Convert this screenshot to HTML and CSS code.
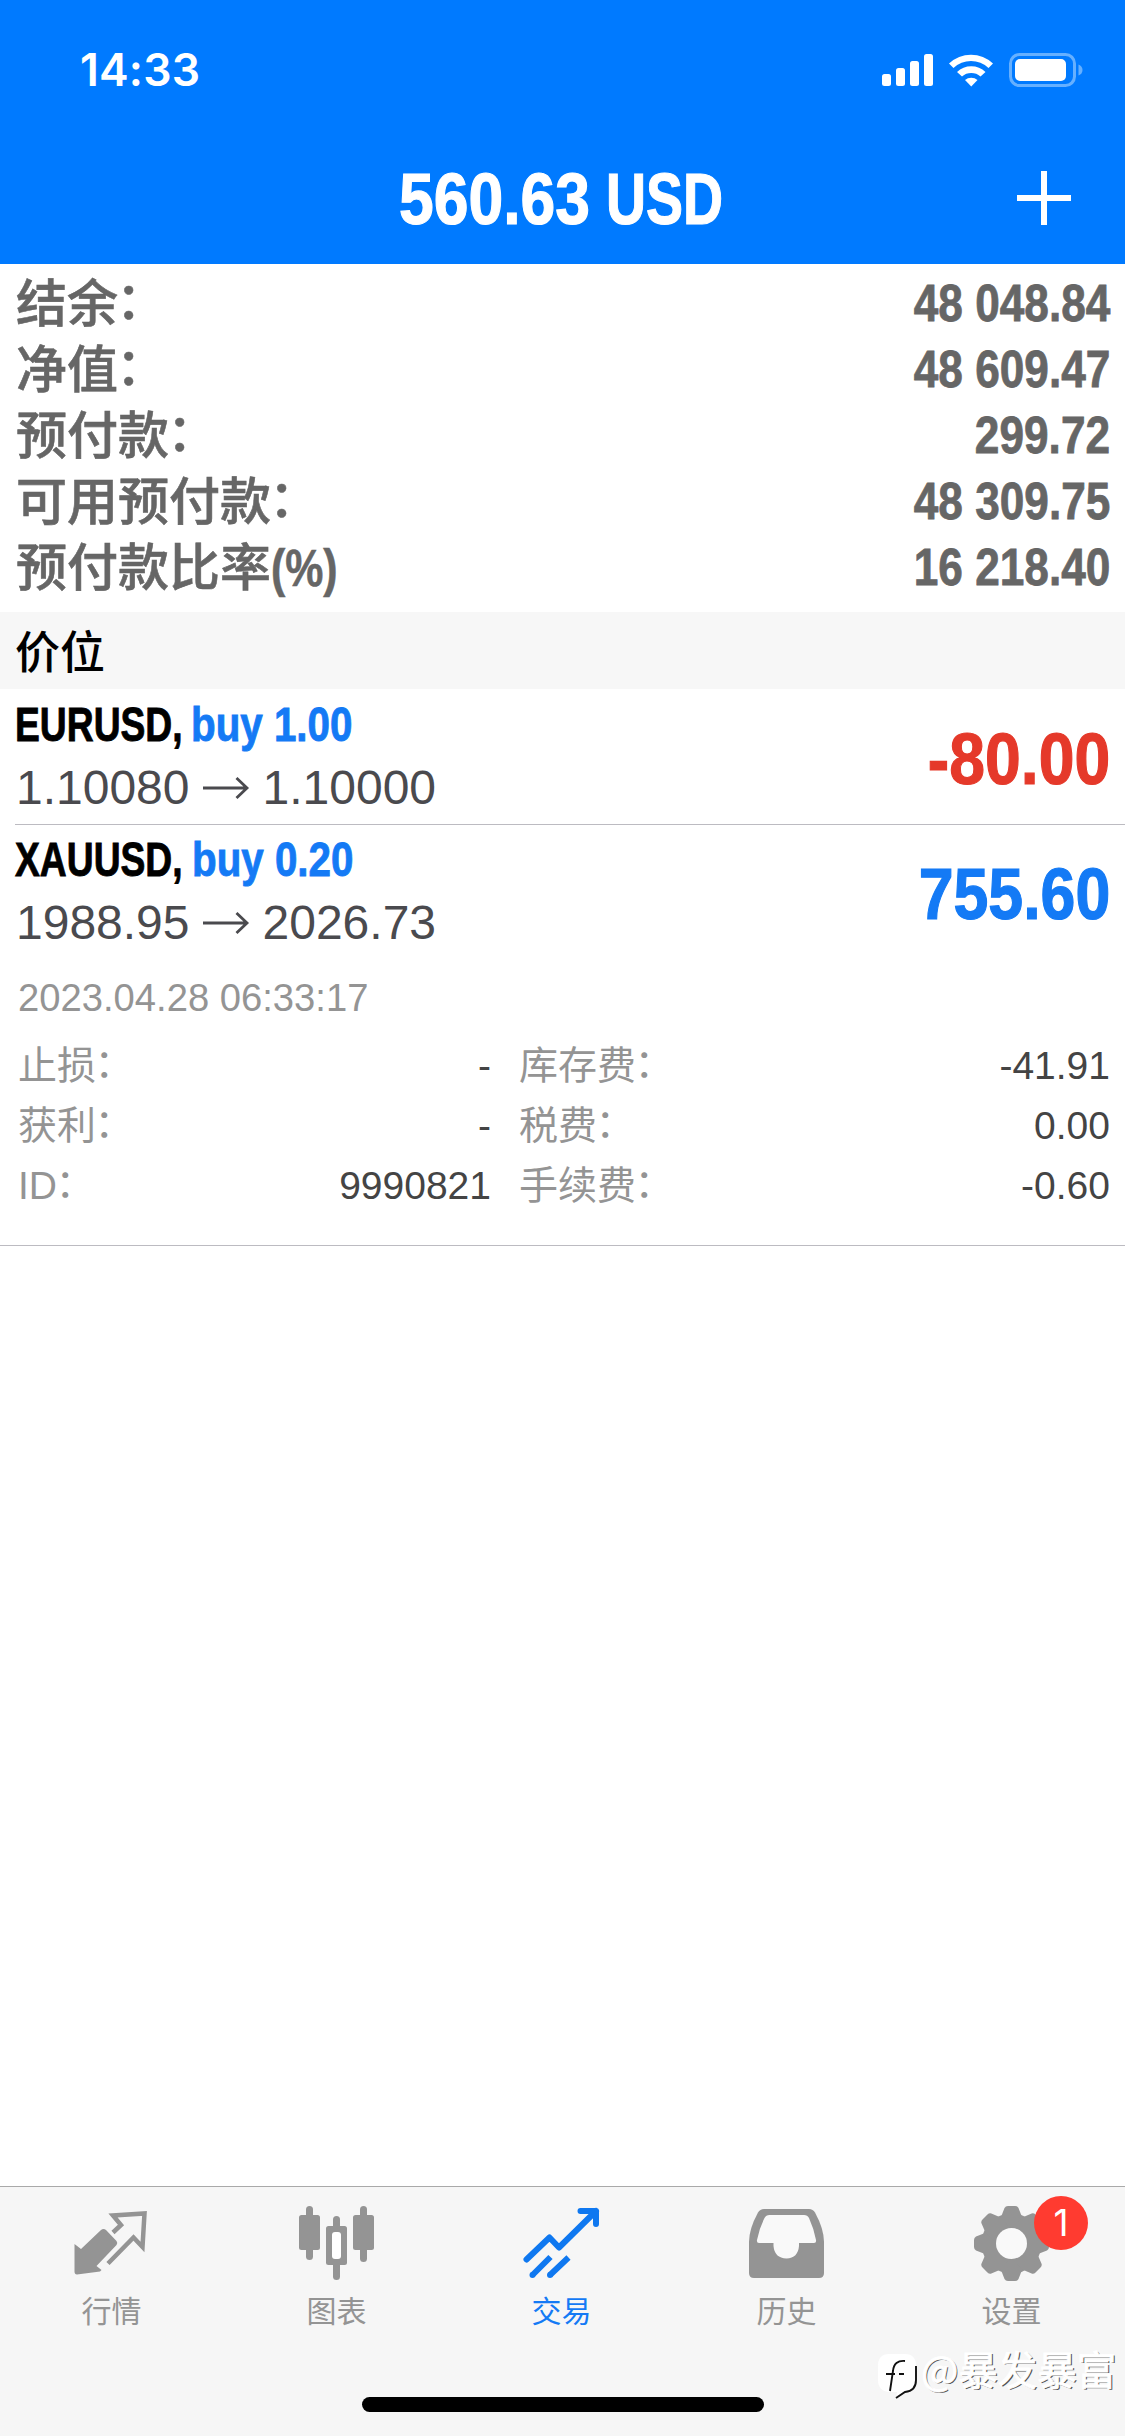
FILE: index.html
```html
<!DOCTYPE html>
<html lang="zh-CN">
<head>
<meta charset="utf-8">
<title>交易</title>
<link rel="stylesheet" href="styles.css">
</head>
<body>
<div class="app">
  <header class="header">
    <div class="status">
      <span class="clock">14:33</span>
      <svg class="status-icons" width="202" height="36" viewBox="0 0 202 36">
        <g fill="#fff">
          <rect x="0" y="22" width="9" height="12" rx="2.5"/>
          <rect x="14" y="16" width="9" height="18" rx="2.5"/>
          <rect x="28" y="9" width="9" height="25" rx="2.5"/>
          <rect x="42" y="2" width="9" height="32" rx="2.5"/>
          <path d="M67 11.500A32 32 0 0 1 111 11.500L106.500 16A25.500 25.500 0 0 0 71.500 16Z"/>
          <path d="M75 20A20.500 20.500 0 0 1 103.500 20L98.500 24.500A14 14 0 0 0 80 24.500Z"/>
          <path d="M83 28A9.500 9.500 0 0 1 95.500 28L89.250 34.500Z"/>
          <rect x="133" y="7" width="51" height="22" rx="5"/>
        </g>
        <rect x="128.500" y="2.500" width="64" height="31" rx="9" fill="none" stroke="#66b0ff" stroke-width="3"/>
        <path d="M196.500 12.500Q200.500 14 200.500 18T196.500 23.500Z" fill="#66b0ff"/>
      </svg>
    </div>
    <div class="titlebar">
      <h1 class="title"><span class="amount">560.63</span><span class="currency">USD</span></h1>
      <svg class="add" width="56" height="56" viewBox="0 0 56 56"><path d="M28 1V55M1 28H55" stroke="#fff" stroke-width="6"/></svg>
    </div>
  </header>

  <main class="content">
    <dl class="summary">
      <div class="sum-row"><dt>结余<span class="colon">：</span></dt><dd>48 048.84</dd></div>
      <div class="sum-row"><dt>净值<span class="colon">：</span></dt><dd>48 609.47</dd></div>
      <div class="sum-row"><dt>预付款<span class="colon">：</span></dt><dd>299.72</dd></div>
      <div class="sum-row"><dt>可用预付款<span class="colon">：</span></dt><dd>48 309.75</dd></div>
      <div class="sum-row"><dt>预付款比率<span class="pct">(%)</span></dt><dd>16 218.40</dd></div>
    </dl>
    <h2 class="section">价位</h2>

    <section class="position">
      <div class="pos-main">
        <div class="pos-name"><span class="symbol eur">EURUSD,</span><span class="order">buy 1.00</span></div>
        <div class="pos-price">1.10080<svg class="arrow" width="48" height="22" viewBox="0 0 48 22"><path d="M1 11H45M34.500 1L45 11L34.500 21" fill="none" stroke="#4a4a4e" stroke-width="2.800"/></svg>1.10000</div>
      </div>
      <div class="profit loss">-80.00</div>
    </section>

    <section class="position second">
      <div class="pos-main">
        <div class="pos-name"><span class="symbol xau">XAUUSD,</span><span class="order">buy 0.20</span></div>
        <div class="pos-price">1988.95<svg class="arrow" width="48" height="22" viewBox="0 0 48 22"><path d="M1 11H45M34.500 1L45 11L34.500 21" fill="none" stroke="#4a4a4e" stroke-width="2.800"/></svg>2026.73</div>
      </div>
      <div class="profit gain">755.60</div>
    </section>

    <section class="details">
      <div class="time">2023.04.28 06:33:17</div>
      <div class="grid">
        <span class="k">止损<span class="colon">：</span></span><span class="v">-</span><span class="k">库存费<span class="colon">：</span></span><span class="v">-41.91</span>
        <span class="k">获利<span class="colon">：</span></span><span class="v">-</span><span class="k">税费<span class="colon">：</span></span><span class="v">0.00</span>
        <span class="k">ID<span class="colon">：</span></span><span class="v">9990821</span><span class="k">手续费<span class="colon">：</span></span><span class="v">-0.60</span>
      </div>
    </section>
  </main>

  <footer class="footer">
    <nav class="tabs">
      <div class="tab">
        <svg width="80" height="80" viewBox="0 0 80 80">
          <path d="M2.500 39L9 44L29 25Q31.500 23 34 25L44.500 36Q46 38 44.500 40L24.500 61L29.500 65L28 66.500L5 69.500Q2.500 69.500 2.500 66.500Z" fill="#949494"/>
          <path d="M41 27.500L49 20L41 10.500L72.500 8.500L70.500 42L61.500 32.500L36 58.500" fill="none" stroke="#949494" stroke-width="4.500"/>
        </svg>
        <span>行情</span>
      </div>
      <div class="tab">
        <svg width="80" height="80" viewBox="0 0 80 80">
          <g fill="#949494">
            <rect x="9" y="1" width="7" height="54" rx="3.500"/><rect x="2" y="10" width="21" height="35" rx="2.500"/>
            <rect x="36" y="11" width="7" height="64" rx="3.500"/><rect x="29" y="21" width="21" height="39" rx="2.500"/>
            <rect x="63" y="1" width="7" height="56" rx="3.500"/><rect x="56" y="10" width="21" height="35" rx="2.500"/>
          </g>
          <rect x="35" y="27" width="9" height="27" rx="3" fill="#fff"/>
        </svg>
        <span>图表</span>
      </div>
      <div class="tab active">
        <svg width="80" height="80" viewBox="0 0 80 80">
          <path d="M4.500 54.500L27.500 32.500L37 42.500L74 6M58.500 6H74V19" fill="none" stroke="#0f78f0" stroke-width="6" stroke-linecap="round" stroke-linejoin="round"/>
          <path d="M10.500 70L28.500 52M28 70L46.500 52.500" fill="none" stroke="#0f78f0" stroke-width="6"/>
          <circle cx="10.500" cy="70" r="3" fill="#0f78f0"/><circle cx="28" cy="70" r="3" fill="#0f78f0"/>
        </svg>
        <span>交易</span>
      </div>
      <div class="tab">
        <svg width="80" height="80" viewBox="0 0 80 80">
          <path d="M17 4H62Q66 4 68 7.500Q77 24 77 37V68Q77 73 72 73H7Q2 73 2 68V37Q2 24 11 7.500Q13 4 17 4Z" fill="#949494"/>
          <path d="M22.500 10H57Q60.500 10 62 13Q67 24 69 35Q69.500 38 67 38H52V41Q51 53 39.500 53.500Q27.500 53 26.500 41V38H12Q9.500 38 10 35Q12 24 17.500 13Q19 10 22.500 10Z" fill="#f9f9f9"/>
        </svg>
        <span>历史</span>
      </div>
      <div class="tab">
        <svg width="80" height="80" viewBox="0 0 80 80">
          <g fill="#949494">
            <circle cx="39.500" cy="38.500" r="30"/>
            <path id="tooth" d="M29 12L32.500 3Q33.500 1 36 1H43Q45.500 1 46.500 3L50 12V65L46.500 74Q45.500 76 43 76H36Q33.500 76 32.500 74L29 65Z"/>
            <use href="#tooth" transform="rotate(45 39.500 38.500)"/><use href="#tooth" transform="rotate(90 39.500 38.500)"/><use href="#tooth" transform="rotate(135 39.500 38.500)"/>
          </g>
          <circle cx="39.500" cy="38.500" r="15.500" fill="#f9f9f9"/>
        </svg>
        <b class="badge">1</b>
        <span>设置</span>
      </div>
    </nav>
    <div class="home"></div>
    <div class="watermark">
      <svg width="44" height="48" viewBox="0 0 44 48">
        <path d="M12 1H28Q39 1 39 13V27Q39 38 28 39L19 45L20 39H12Q1 38 1 27V13Q1 1 12 1Z" fill="#fff"/>
        <path d="M39 13V27Q39 38 28 39L19 45M28 8Q17 7 16 18L13 38M9 21H18M22 21H27" fill="none" stroke="#111" stroke-width="1.900"/>
      </svg>
      <span>@暴发暴富</span>
    </div>
  </footer>
</div>
</body>
</html>
```
FILE: styles.css
```css
* { box-sizing: border-box; }
body, h1, h2, dl, dd { margin: 0; }
body {
  font-family: "Liberation Sans", "Noto Sans CJK SC", sans-serif;
  background: #fff;
}
.app {
  width: 1125px;
  height: 2436px;
  display: flex;
  flex-direction: column;
  overflow: hidden;
}
svg { display: block; flex: none; }

.header { height: 264px; background: #007aff; color: #fff; }
.status {
  height: 132px;
  padding: 7px 41px 0 80px;
  display: flex;
  align-items: center;
  justify-content: space-between;
}
.clock {
  font: 600 44.5px/60px Inter, sans-serif;
  letter-spacing: 0.2px;
}
.titlebar {
  height: 132px;
  padding: 0 53px;
  display: grid;
  grid-template-columns: 56px 1fr 56px;
  align-items: center;
}
.title {
  grid-column: 2;
  display: flex;
  justify-content: center;
  padding-top: 2px;
  font-size: 73px;
  line-height: 130px;
  white-space: nowrap;
  -webkit-text-stroke: 1.2px currentColor;
}
.amount { width: 207px; transform: scaleX(0.855); transform-origin: left; }
.currency { width: 120px; transform: scaleX(0.76); transform-origin: left; }

.content { flex: 1; }
.summary { height: 348px; padding: 6px 15px 0 16px; color: #666; }
.sum-row {
  height: 66px;
  display: flex;
  justify-content: space-between;
  line-height: 66px;
  white-space: nowrap;
}
.sum-row dt {
  padding-top: 2px;
  font-size: 51px;
  font-weight: 500;
  -webkit-text-stroke: 0.6px currentColor;
}
.colon { display: inline-block; transform: translate(-0.04em, -0.05em); }
.pct {
  display: inline-block;
  font-weight: 700;
  transform: scaleX(0.84);
  transform-origin: left;
}
.sum-row dd {
  font-size: 52px;
  font-weight: 700;
  transform: scaleX(0.85);
  transform-origin: right;
  -webkit-text-stroke: 0.8px currentColor;
}
.section {
  height: 77px;
  padding-left: 15px;
  background: #f7f7f7;
  color: #000;
  font: 500 45px/75px "Noto Sans CJK SC", sans-serif;
}

.position {
  height: 136px;
  margin-left: 15px;
  padding-right: 15px;
  display: flex;
  justify-content: space-between;
  border-bottom: 1px solid #bcbbc1;
}
.position.second { height: 135px; border-bottom: 0; }
.pos-name {
  height: 70px;
  display: flex;
  font-size: 49px;
  font-weight: 700;
  line-height: 70px;
  white-space: nowrap;
  -webkit-text-stroke: 0.9px currentColor;
}
.second .pos-name { height: 69px; line-height: 69px; }
.symbol { color: #000; transform: scaleX(0.76); transform-origin: left; }
.eur { width: 176px; }
.xau { width: 177px; }
.order { color: #147af5; transform: scaleX(0.823); transform-origin: left; }
.pos-price {
  display: flex;
  align-items: center;
  padding-left: 1px;
  font-size: 48px;
  line-height: 58px;
  color: #4a4a4e;
}
.arrow { margin: 0 13px 0 12px; }
.profit {
  font-size: 72px;
  font-weight: 700;
  line-height: 140px;
  transform: scaleX(0.87);
  transform-origin: right;
  -webkit-text-stroke: 1.2px currentColor;
}
.second .profit { line-height: 138px; }
.loss { color: #e5392a; transform: scaleX(0.893); }
.gain { color: #147af5; }

.details {
  height: 286px;
  padding: 16px 15px 0 18px;
  border-bottom: 1px solid #bcbbc1;
  font-size: 39px;
  color: #949494;
}
.time { height: 60px; font-size: 38.2px; line-height: 44px; }
.grid {
  display: grid;
  grid-template-columns: 236px 237px 234px 1fr;
  grid-auto-rows: 60px;
  line-height: 60px;
}
.k:nth-child(4n+3) { padding-left: 28px; }
.v { text-align: right; color: #444; }

.footer {
  position: relative;
  height: 250px;
  border-top: 1px solid #a9a9a9;
  background: #f6f6f6;
}
.tabs {
  display: grid;
  grid-template-columns: repeat(5, 225px);
  height: 210px;
  margin-left: -1px;
}
.tab {
  position: relative;
  display: flex;
  flex-direction: column;
  align-items: center;
  padding-top: 18px;
  font: 400 30px/44px "Noto Sans CJK SC", sans-serif;
  color: #949494;
}
.tab > span { margin-top: 2px; }
.tab.active { color: #147af5; }
.badge {
  position: absolute;
  left: 135px;
  top: 9px;
  width: 54px;
  height: 54px;
  border-radius: 50%;
  background: #ff3b30;
  color: #fff;
  font: 400 37px/54px Inter, sans-serif;
  text-align: center;
}
.home { width: 402px; height: 15px; margin: 0 auto; border-radius: 8px; background: #000; }
.watermark {
  position: absolute;
  left: 877px;
  top: 166px;
  display: flex;
  color: #fff;
  font: 400 39.5px/44px "Noto Sans CJK SC", sans-serif;
  -webkit-text-stroke: 0.8px #fff;
  text-shadow: 1.3px 1.3px 0.6px #555;
  white-space: nowrap;
}
.watermark span { margin-top: -7px; }
```
